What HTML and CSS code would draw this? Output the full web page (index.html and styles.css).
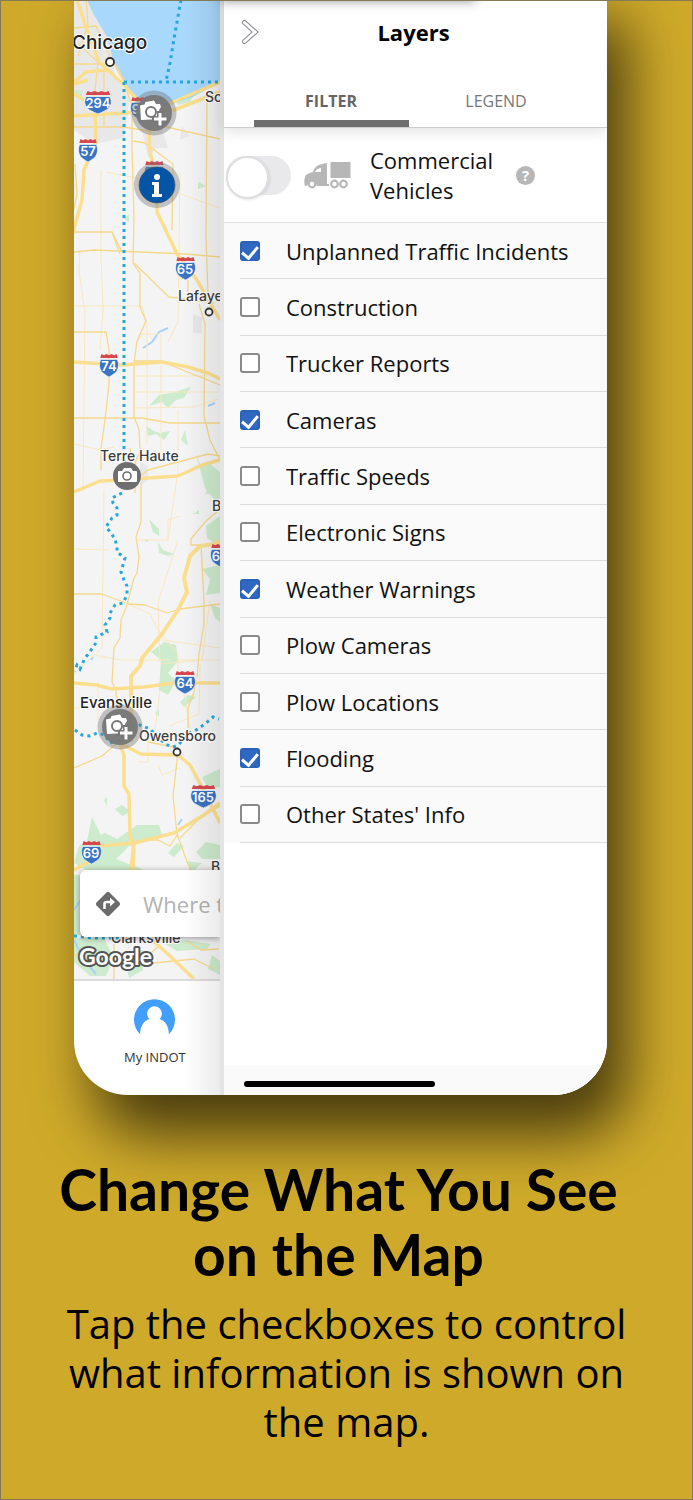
FILE: index.html
```html
<!DOCTYPE html>
<html lang="en">
<head>
    <meta charset="UTF-8">
    <meta name="viewport" content="width=device-width, initial-scale=1.0">
    <title>Change What You See on the Map</title>
    <link rel="stylesheet" href="styles.css">
</head>
<body>
    <div class="phone">
        <div class="screen">
            <div class="map-side">
                <div class="map">
                    <svg class="map-canvas" viewBox="74 0 146 980" preserveAspectRatio="xMinYMin slice" role="img" aria-label="Map">
                        <defs>
                            <symbol id="shield" viewBox="0 0 24 26" preserveAspectRatio="none">
                                <path d="M2 7C0 11 0 16 3 20c2 2 5 4 9 6 4-2 7-4 9-6 3-4 3-9 1-13z" fill="#3973c4" stroke="#fff" stroke-width=".7"/>
                                <path d="M3 1l3 1.500 3-1.500 3 1.500 3-1.500 3 1.500 3-1.500 1.500 4.500H1.500z" fill="#d9474e"/>
                            </symbol>
                            <symbol id="camera-plus" viewBox="-23 -23 46 46">
                                <circle r="22.500" fill="#777" opacity=".42"/>
                                <circle r="18" fill="#777" opacity=".95"/>
                                <path d="M-14-7.500l4.500-1 1-2.500 8.500-1.500 2 3.500 4 0 1 3-2 3 1 9-19 1z" fill="#fff"/>
                                <circle cx="-3" cy="-1" r="5" fill="#fff" stroke="#777" stroke-width="2"/>
                                <path d="M6 -2v16M-2 6h16" stroke="#777" stroke-width="6"/>
                                <path d="M6 0v12.500M0 6h12.500" stroke="#fff" stroke-width="3"/>
                            </symbol>
                        </defs>

                        <rect x="74" width="146" height="980" fill="#f4f4f4"/>

                        <!-- city blocks -->
                        <g fill="#e8e8e8">
                            <path d="M74 0h14l20 38 8 40 14 20-6 40-30 6-20-14z"/>
                            <path d="M142 130l20-2 6 20-12 0-8 10zM182 126l8 10-10 4zM193 315l9 2v16h-9zM140 462l8 4v14l-8 6z"/>
                        </g>

                        <!-- parks -->
                        <g fill="#cdebcd">
                            <path d="M74 90l8 1v9l-8-6zM176 101l20-9-6 10-12 3zM198 182l8 4-8 3zM123 218l6-3v7z"/>
                            <path d="M149 406l10-11 12-2 20-6-7 11-8 2-8 8-6-6z"/>
                            <path d="M146 426l8 5 6 2 10-2-6 9-8-6-8 2zM181 440l4-10 3 16zM196 454l4 10 10 0 10 8v27l-6 0-9-11z"/>
                            <path d="M149 519l10 10 0 7-6-4zM144 539l6 1-4 2zM158 542l5 8 11 4-6 2-9-3zM205 494l9-14 6 0v15l-10-1zM193 514l6-4 0 4zM206 526l14-10v31l-13-9z"/>
                            <path d="M202 569l18-4v28l-14 2 4-16zM210 604l10 4v14l-5-4zM151 652l13-10 12 3 2 16-10 12 8 8-8 14-9-5 2-30zM180 702l8-7 8 2-12 10zM155 713l4-4v8z"/>
                            <path d="M92 817l9 18 6 6-20 0zM104 800l3-3 0 9zM115 809l7-4 9 7-9 4zM202 777l18-8v18l-12 2z"/>
                            <path d="M79 846l26-13 12 6 20-14 22 0 3 10-22 6-12 6-12 12 26 10 8 18h-52l-10-16-14-8z"/>
                            <path d="M168 853l9-10 7 3-10 11zM196 852l10-10 14 3v14l-18 0zM186 861l16 2-10 9z"/>
                            <path d="M74 938h30l10 20-8 18H90l-16-14zM125 960l18-10 0 20-14 8zM165 944l20-4 26 4-4 5-30 2zM212 955l8 6v14l-12-6z"/>
                            <path d="M74 875h8v60h-8z"/>
                        </g>

                        <!-- water -->
                        <path d="M87 0l6 13 14 24 6 23 10 20 9 17 18 6 20 2 23-8 27-15V0z" fill="#a8d8fb"/>
                        <path d="M143 348l9-6 7-10 9-4M208 406l7-3M91 660l2-3M178 825l4-6M74 910l8-12M74 940l10 20 12 14" fill="none" stroke="#a8d2fa" stroke-width="2"/>

                        <!-- faint roads -->
                        <g fill="none" stroke="#f9e8bf" stroke-width="1">
                            <path d="M80 250l-1 22 6 40-2 180M101 170v86l2 54-3 40M74 306l68 0 5 18 0 120M106 172l30 6M136 178l84 30M180 172l-2 150-10 20M160 334l-18 0-6 10M161 334v30"/>
                            <path d="M134 376l84 0M134 392h84M134 408l60-1 24-8M161 365v90M178 410v60l-10 70h-30M74 444l26 6 14 -3M178 540l-20 62 2 60M180 516l-12 4v22M74 549l35 1M104 490l-2 158-28 26"/>
                            <path d="M128 604l22 10 8 16 20 24v36M210 600l-8 60-42 4M102 656l18 4h50M178 660h42M200 664l-1 50-30 12M148 736v26l-10 0M158 765l4 10 18-7M96 655l10 4M74 708l62-4M98 680v40M160 690l-5 40M162 640l58 8M184 690l6 40"/>
                        </g>

                        <!-- minor roads -->
                        <g fill="none" stroke="#f6d88c" stroke-width="1.300" stroke-linejoin="round">
                            <path d="M74 28l22-2 12 26 16 28M74 64h40l10 18M74 127h50l24 4M78 44l20 18-4 38M86 0l2 24-10 32M104 126v-60"/>
                            <path d="M124 82l8 24 0 42 2 70-1 45 7 10 0 34 6 14-9 20-3 22 0 54 5 12 1 22-5 12v30"/>
                            <path d="M133 141l12 2 20 15 8 6-1 66M112 232l8 22M74 232h38l10 20M75 164l2 30-10 48M148 128l14-2 58 13M207 96l-1 140 2 60M134 263l35 34 45 6M74 252l20-2 92 4 34 3"/>
                            <path d="M199 304l6 20-1 92 6 24 10 20M74 332l32 0 3 18 0 34-4 36-4 28v22M134 361h26l60 24M74 418h68l28 5h50M130 448l3 30M140 476l8-6 60-16 12 2M188 280v18"/>
                            <path d="M141 484v38l-5 15 3 20-2 16-3 5-8 30-5 12-1 18-6 10-2 34 4 8 2 50M74 594l28 0 24 9M128 604l17 1 22 8 13-4 40-5"/>
                            <path d="M219 510l-14 12-14 17v6l10 0 3 55 0 24-5 30-2 24M188 728v-20l6-16 2-12M74 768l28-12 14-12M178 752l-5 44 4 38 8 22 8 20"/>
                            <path d="M178 834l-8 12-12-6-12 0M148 742l30 6M180 838l20-20 20-12M74 955l40 8 40 0 40-4 20 10M187 941l14 9 18-1M114 940v40M160 945l-16 14"/>
                        </g>

                        <!-- major roads -->
                        <g fill="none" stroke="#fbdf8e" stroke-width="3.500" stroke-linejoin="round">
                            <path d="M77 0l8 24 14 38 24 22 18 20 10 9M88 80l-14 4M95 112l1 30-12 28-2 30-14 50M74 116l50-3 50-3 46-18M150 116l-1 30 8 40 0 26 20 42 20 26 23 40"/>
                            <path d="M74 82l12-10 20-2M74 94l10 6M150 113l16-8 54-23M74 362l48 3 40-3 26 5 20 6 12 6M74 492l26-11 22-1 26-2 30-2 24-11 18-5"/>
                            <path d="M131 742v-66l9-10 2-8 20-24 16-24 9-18-3-14 6-22 10-10 14-2 14-7" stroke-width="4"/>
                            <path d="M74 683l22 2 16 4 32-2 30-4h46M119 740l5 16 0 30 5 8 1 40 4 16-2 30"/>
                            <path d="M121 744l20 10 37 1 12 10 14 26 16 32M74 870l14-8M100 846l34-3 40-10 30-18 16-12M134 844l-4 32M150 938l20 18 24 23"/>
                        </g>

                        <!-- state borders -->
                        <g fill="none" stroke="#24a8dc" stroke-width="3" stroke-dasharray="3 4">
                            <path d="M181 0l-6 33-5 30-4 18M124 82h96M124 82v380"/>
                            <path d="M122 493l-10 5 1 5 4 5 0 7-5 3-6 9 5 6 4 6 2 8 0 5 8 6-4 14 3 8 3 6 0 9-4 8-8 2-5 8 0 5-5 7 2 7-11 5 0 6-7 10-4 5-5 11-3-4-3 6"/>
                            <path d="M75 730l7 5 8 1 7-3 8 2 5 8 10-3 10-12 10-3 10 4 8 8 7 7 8 3 5-2 5-5 7-7 6-3 9-6 8-7 6 2M74 936l20 2h34"/>
                        </g>

                        <!-- interstate shields -->
                        <g class="shield-text">
                            <use href="#shield" x="84" y="90" width="28" height="24"/>
                            <text x="98" y="108">294</text>
                            <use href="#shield" x="78" y="138" width="20" height="24"/>
                            <text x="88" y="156">57</text>
                            <use href="#shield" x="130" y="96" width="20" height="24"/>
                            <text x="136" y="114">9</text>
                            <use href="#shield" x="144" y="160" width="21" height="24"/>
                            <use href="#shield" x="175" y="256" width="21" height="24"/>
                            <text x="185" y="274">65</text>
                            <use href="#shield" x="99" y="353" width="20" height="24"/>
                            <text x="109" y="371">74</text>
                            <use href="#shield" x="210" y="543" width="21" height="24"/>
                            <text x="216" y="561">6</text>
                            <use href="#shield" x="174" y="670" width="22" height="24"/>
                            <text x="185" y="688">64</text>
                            <use href="#shield" x="190" y="784" width="27" height="24"/>
                            <text x="203" y="802">165</text>
                            <use href="#shield" x="81" y="840" width="21" height="24"/>
                            <text x="91" y="858">69</text>
                        </g>

                        <!-- places -->
                        <g fill="#fff" stroke="#333" stroke-width="1.800">
                            <circle cx="110" cy="62" r="4"/>
                            <circle cx="209" cy="312" r="3.500"/>
                            <circle cx="177" cy="752" r="3.500"/>
                        </g>
                        <g class="place">
                            <text class="place-big" x="72" y="49">Chicago</text>
                            <text x="205" y="102">South Bend</text>
                            <text x="178" y="301">Lafayette</text>
                            <text x="100" y="461">Terre Haute</text>
                            <text x="212" y="511">Bloomington</text>
                            <text class="place-mid" x="80" y="708">Evansville</text>
                            <text x="139" y="741">Owensboro</text>
                            <text x="211" y="872">Bowling Green</text>
                            <text x="111" y="943">Clarksville</text>
                        </g>

                        <!-- markers -->
                        <use href="#camera-plus" x="131" y="90" width="46" height="46"/>
                        <use href="#camera-plus" x="97" y="704" width="46" height="46"/>
                        <circle cx="157" cy="185" r="23" fill="#777" opacity=".4"/>
                        <circle cx="157" cy="185" r="18" fill="#0455a6" stroke="#555" stroke-width=".6"/>
                        <circle cx="157" cy="177" r="3" fill="#fff"/>
                        <path d="M152 182h7v12h3v3h-10v-3h2v-9h-2z" fill="#fff"/>
                        <circle cx="127" cy="476" r="14" fill="#6e6e6e"/>
                        <path d="M119 471h3l2-3h7l2 3h3q1 0 1 1v9q0 1-1 1h-17q-1 0-1-1v-9q0-1 1-1z" fill="#fff"/>
                        <circle cx="127" cy="476" r="4" fill="#fff" stroke="#6e6e6e" stroke-width="1.600"/>

                        <text class="google" x="79" y="965">Google</text>
                    </svg>

                    <div class="search-bar">
                        <svg class="route-icon" viewBox="0 0 26 26" aria-hidden="true">
                            <path d="M11.500 1.500q1.500-1.300 3 0l10 10q1.300 1.500 0 3l-10 10q-1.500 1.300-3 0l-10-10q-1.300-1.500 0-3z" fill="#6b6b6b"/>
                            <path d="M9.500 18v-5q0-2 2-2h5" fill="none" stroke="#fff" stroke-width="2.600"/>
                            <path d="M15 6.500l5 4.500-5 4.500z" fill="#fff"/>
                        </svg>
                        <input class="search-input" type="text" placeholder="Where to?" aria-label="Where to?">
                    </div>
                </div>

                <div class="bottom-bar">
                    <a class="bottom-link" href="#">
                        <svg class="user-icon" viewBox="0 0 40 40" aria-hidden="true">
                            <path d="M6 34.500A20 20 0 1 1 34 34.500C34 26 30 21 25 19.500A7.200 7.200 0 1 0 15 19.500C10 21 6 26 6 34.500z" fill="#429efb"/>
                        </svg>
                        <span>My INDOT</span>
                    </a>
                </div>
            </div>

            <div class="drawer">
                <div class="drawer-header">
                    <div class="title-row">
                        <button class="close-button" type="button" aria-label="Close layers">
                            <svg viewBox="0 0 18 26" aria-hidden="true">
                                <path d="M3.500 3.500L14 13 3.500 22.500" fill="none" stroke="#888b93" stroke-width="5" stroke-linecap="round"/>
                                <path d="M3.500 3.500L14 13 3.500 22.500" fill="none" stroke="#fff" stroke-width="3" stroke-linecap="round"/>
                            </svg>
                        </button>
                        <h2 class="drawer-title">Layers</h2>
                    </div>
                    <div class="tabs">
                        <button class="tab active" type="button">FILTER</button>
                        <button class="tab" type="button">LEGEND</button>
                    </div>
                </div>

                <div class="vehicles">
                    <input class="switch" type="checkbox" id="vehicles">
                    <svg class="truck-icon" viewBox="0 0 47 27" aria-hidden="true">
                        <path d="M26.500 0h20v16h-20z" fill="#b7b7b7"/>
                        <path d="M1 15q.5-3 8-5 2-7 9-8l5-1v21h2v2H13a5.200 5.200 0 0 0-10 0H1q-1.500-4 0-9z" fill="#b7b7b7"/>
                        <path d="M11 10q1-3.500 6-4v4z" fill="#fff"/>
                        <g fill="#fff" stroke="#b7b7b7" stroke-width="2.200">
                            <circle cx="8" cy="22" r="3.300"/>
                            <circle cx="30.500" cy="22" r="3.300"/>
                            <circle cx="39.500" cy="22" r="3.300"/>
                        </g>
                    </svg>
                    <label class="vehicles-label" for="vehicles">Commercial Vehicles</label>
                    <button class="help-button" type="button" aria-label="Help">?</button>
                </div>

                <ul class="layers">
                    <li class="layer"><input type="checkbox" id="incidents" checked><label for="incidents">Unplanned Traffic Incidents</label></li>
                    <li class="layer"><input type="checkbox" id="construction"><label for="construction">Construction</label></li>
                    <li class="layer"><input type="checkbox" id="trucker"><label for="trucker">Trucker Reports</label></li>
                    <li class="layer"><input type="checkbox" id="cameras" checked><label for="cameras">Cameras</label></li>
                    <li class="layer"><input type="checkbox" id="speeds"><label for="speeds">Traffic Speeds</label></li>
                    <li class="layer"><input type="checkbox" id="signs"><label for="signs">Electronic Signs</label></li>
                    <li class="layer"><input type="checkbox" id="weather" checked><label for="weather">Weather Warnings</label></li>
                    <li class="layer"><input type="checkbox" id="plow-cameras"><label for="plow-cameras">Plow Cameras</label></li>
                    <li class="layer"><input type="checkbox" id="plow-locations"><label for="plow-locations">Plow Locations</label></li>
                    <li class="layer"><input type="checkbox" id="flooding" checked><label for="flooding">Flooding</label></li>
                    <li class="layer"><input type="checkbox" id="other-states"><label for="other-states">Other States' Info</label></li>
                </ul>

                <div class="home-area"><div class="home-bar"></div></div>
            </div>
        </div>
    </div>

    <div class="caption">
        <h1 class="caption-title">Change What You See on the Map</h1>
        <p class="caption-text">Tap the checkboxes to control what information is shown on the map.</p>
    </div>
</body>
</html>
```
FILE: styles.css
```css
* {
    margin: 0;
    padding: 0;
    box-sizing: border-box;
}

body {
    font-family: "Open Sans", "Noto Sans", sans-serif;
    background: #cfaa2a;
    border: 1px solid #857a57;
    min-height: 100vh;
    color: #111;
    display: flex;
    flex-direction: column;
    overflow-x: hidden;
}

.phone {
    flex: 1;
    display: flex;
    margin: -20px 85px 0 73px;
    padding-top: 19px;
    background: white;
    border-radius: 0 0 54px 54px;
    box-shadow: 20px 40px 60px rgba(0, 0, 0, 0.65);
}

.screen {
    flex: 1;
    display: grid;
    grid-template-columns: 146px 1fr;
    border-radius: 0 0 54px 54px;
    overflow: hidden;
}

/* map side */

.map-side {
    position: relative;
    display: flex;
    flex-direction: column;
    overflow: hidden;
}

.map-side::after {
    content: "";
    position: absolute;
    top: 0;
    right: 0;
    bottom: 0;
    width: 36px;
    background: linear-gradient(to right, rgba(0, 0, 0, 0), rgba(0, 0, 0, 0.08));
    pointer-events: none;
}

.map {
    position: relative;
    flex: 1;
    border-bottom: 2px solid #dcdcdc;
}

.map-canvas {
    position: absolute;
    width: 100%;
    height: 100%;
}

.shield-text text {
    font: 600 13px "Inter", sans-serif;
    fill: white;
    text-anchor: middle;
}

.place text {
    font: 500 14px "Inter", sans-serif;
    fill: #3c3c3c;
    stroke: white;
    stroke-width: 2px;
    paint-order: stroke;
}

.place .place-big {
    font-size: 19px;
    fill: #222;
}

.place .place-mid {
    font-size: 15px;
    fill: #222;
}

.google {
    font: bold 23px "Lato", sans-serif;
    fill: white;
    stroke: #555;
    stroke-width: 4px;
    stroke-linejoin: round;
    paint-order: stroke;
}

.search-bar {
    position: absolute;
    left: 6px;
    right: 0;
    bottom: 42px;
    height: 67px;
    padding-left: 15px;
    display: flex;
    align-items: center;
    gap: 22px;
    background: white;
    border-radius: 6px 0 0 6px;
    box-shadow: 0 1px 6px rgba(0, 0, 0, 0.4);
}

.route-icon {
    width: 26px;
    height: 26px;
    flex: none;
}

.search-input {
    min-width: 0;
    flex: 1;
    border: none;
    background: none;
    font: 22px "Open Sans", sans-serif;
}

.search-input::placeholder {
    color: #b3b3b3;
}

.bottom-bar {
    height: 114px;
    padding: 18px 0 0 50px;
}

.bottom-link {
    display: inline-flex;
    flex-direction: column;
    align-items: center;
    gap: 7px;
    color: #333;
    font-size: 13px;
    line-height: 20px;
    text-decoration: none;
}

.user-icon {
    width: 41px;
    height: 41px;
}

/* drawer */

.drawer {
    display: flex;
    flex-direction: column;
    background: white;
    border-left: 4px solid #e4e4e4;
}

.drawer-header {
    position: relative;
    z-index: 1;
    display: flex;
    flex-direction: column;
    justify-content: space-between;
    height: 128px;
    background: white;
    border-bottom: 1px solid #ccc;
    box-shadow: 0 3px 14px rgba(0, 0, 0, 0.13);
}

/* shade of the bar above the header */
.drawer-header::before {
    content: "";
    position: absolute;
    top: -12px;
    left: -4px;
    width: 256px;
    height: 10px;
    box-shadow: 0 2px 12px rgba(0, 0, 0, 0.5);
}

.title-row {
    display: grid;
    grid-template-columns: 52px 1fr 56px;
    align-items: center;
    padding-top: 16px;
}

.close-button {
    width: 18px;
    height: 26px;
    margin-left: 17px;
    border: none;
    background: none;
    cursor: pointer;
}

.close-button svg {
    display: block;
    width: 18px;
    height: 26px;
}

.drawer-title {
    font-size: 22px;
    line-height: 32px;
    color: black;
    text-align: center;
}

.tabs {
    display: flex;
    justify-content: center;
    gap: 10px;
    padding-right: 4px;
}

.tab {
    width: 155px;
    height: 46px;
    border: none;
    border-bottom: 7px solid transparent;
    background: none;
    color: #777;
    font: 16px "Open Sans", sans-serif;
    cursor: pointer;
}

.tab.active {
    color: #666;
    font-weight: bold;
    border-bottom-color: #6e6e6e;
}

.vehicles {
    display: flex;
    align-items: center;
    height: 95px;
    padding-left: 2px;
    border-bottom: 1px solid #e0e0e0;
}

.switch {
    appearance: none;
    width: 65px;
    height: 39px;
    flex: none;
    border-radius: 20px;
    background: #e9e9eb;
}

.switch::before {
    content: "";
    display: block;
    width: 39px;
    height: 39px;
    border: 2px solid #dedee0;
    border-radius: 50%;
    background: white;
    box-shadow: 1px 1px 3px rgba(0, 0, 0, 0.1);
}

.truck-icon {
    width: 47px;
    height: 27px;
    flex: none;
    margin: 0 19px 0 13px;
}

.vehicles-label {
    width: 130px;
    font-size: 22px;
    line-height: 30px;
}

.help-button {
    width: 19px;
    height: 19px;
    margin-left: 16px;
    border: none;
    border-radius: 50%;
    background: #b7b7b7;
    color: white;
    font: bold 15px/19px "Open Sans", sans-serif;
    text-align: center;
    cursor: pointer;
}

.layers {
    display: grid;
    grid-auto-rows: 1fr;
    min-height: 620px;
    padding-left: 16px;
    background: #fafafa;
    list-style: none;
}

.layer {
    display: flex;
    align-items: center;
    gap: 26px;
    border-bottom: 1px solid #dcdcdc;
    font-size: 22px;
}

.layer input {
    appearance: none;
    width: 20px;
    height: 20px;
    flex: none;
    display: flex;
    justify-content: center;
    border: 2px solid #8a8a8a;
    border-radius: 3px;
    background: white;
}

.layer input:checked {
    border-color: #2a62b8;
    background: #2f68c0;
}

.layer input:checked::before {
    content: "";
    width: 7px;
    height: 13px;
    border: solid white;
    border-width: 0 3px 3px 0;
    transform: rotate(40deg);
}

.home-area {
    height: 30px;
    margin-top: auto;
    padding: 16px 0 0 20px;
    background: #fafafa;
}

.home-bar {
    width: 191px;
    height: 6px;
    border-radius: 3px;
    background: black;
}

/* caption */

.caption {
    padding: 62px 40px 53px;
    color: black;
    text-align: center;
}

.caption-title {
    padding-right: 16px;
    font: bold 57px/65px "Lato", sans-serif;
}

.caption-text {
    padding-top: 12px;
    font: 40px/49px "Open Sans", sans-serif;
}
```
